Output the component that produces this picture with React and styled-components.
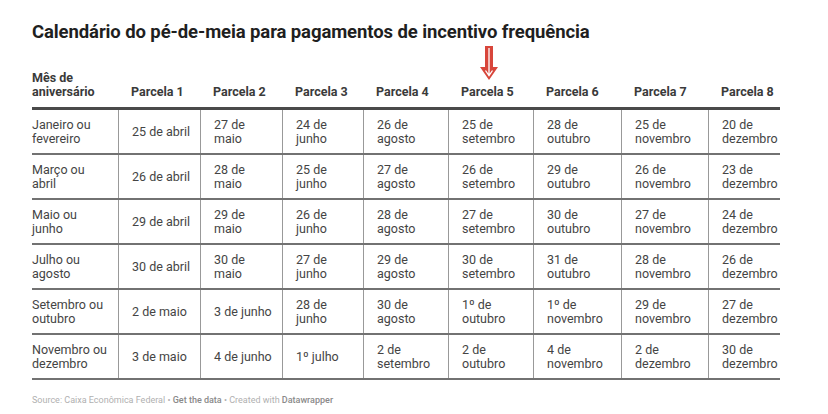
import React from "react";
import styled, { createGlobalStyle } from "styled-components";

const GlobalStyle = createGlobalStyle`
  html, body {
    margin: 0;
    padding: 0;
    background: #fff;
  }
  body {
    font-family: Roboto, "Liberation Sans", Arial, sans-serif;
  }
`;

const columns = "86px 82px 82px 81px 85px 85px 88px 87px 72px";

const headers = [
  "Parcela 1",
  "Parcela 2",
  "Parcela 3",
  "Parcela 4",
  "Parcela 5",
  "Parcela 6",
  "Parcela 7",
  "Parcela 8",
];

// "\n" marks where the cell wraps in the chart
const rows = [
  ["Janeiro ou\nfevereiro", "25 de abril", "27 de\nmaio", "24 de\njunho", "26 de\nagosto", "25 de\nsetembro", "28 de\noutubro", "25 de\nnovembro", "20 de\ndezembro"],
  ["Março ou\nabril", "26 de abril", "28 de\nmaio", "25 de\njunho", "27 de\nagosto", "26 de\nsetembro", "29 de\noutubro", "26 de\nnovembro", "23 de\ndezembro"],
  ["Maio ou\njunho", "29 de abril", "29 de\nmaio", "26 de\njunho", "28 de\nagosto", "27 de\nsetembro", "30 de\noutubro", "27 de\nnovembro", "24 de\ndezembro"],
  ["Julho ou\nagosto", "30 de abril", "30 de\nmaio", "27 de\njunho", "29 de\nagosto", "30 de\nsetembro", "31 de\noutubro", "28 de\nnovembro", "26 de\ndezembro"],
  ["Setembro ou\noutubro", "2 de maio", "3 de junho", "28 de\njunho", "30 de\nagosto", "1º de\noutubro", "1º de\nnovembro", "29 de\nnovembro", "27 de\ndezembro"],
  ["Novembro ou\ndezembro", "3 de maio", "4 de junho", "1º julho", "2 de\nsetembro", "2 de\noutubro", "4 de\nnovembro", "2 de\ndezembro", "30 de\ndezembro"],
];

export default function App() {
  return (
    <Page>
      <GlobalStyle />
      <Title>Calendário do pé-de-meia para pagamentos de incentivo frequência</Title>
      <Table>
        <HeadRow>
          <HeadCell first>
            Mês de
            <br />
            aniversário
          </HeadCell>
          {headers.map((h) => (
            <HeadCell key={h}>
              <HeadLabel>
                {h === "Parcela 5" && <Arrow />}
                {h}
              </HeadLabel>
            </HeadCell>
          ))}
        </HeadRow>
        {rows.map((r) => (
          <Row key={r[0]}>
            {r.map((c, i) => (
              <Cell key={i} first={i === 0}>
                {c}
              </Cell>
            ))}
          </Row>
        ))}
      </Table>
      <Source>
        Source: Caixa Econômica Federal • <strong>Get the data</strong> • Created with{" "}
        <strong>Datawrapper</strong>
      </Source>
    </Page>
  );
}

function Arrow() {
  return (
    <ArrowSvg viewBox="0 0 18 34" width="18" height="34">
      <path d="M5 0h8v21h5L9 34 0 21h5z" fill="#d8463b" />
      <path d="M9 2v27M5.5 24.5 9 29.5l3.5-5" stroke="#fff" strokeWidth="1.3" fill="none" />
    </ArrowSvg>
  );
}

const Page = styled.div`
  padding: 19px 0 0 32px;
  width: 796px;
  box-sizing: border-box;
`;

const Title = styled.h1`
  margin: 0;
  font-size: 18.5px;
  font-weight: 700;
  line-height: 26px;
  color: #1f1f1f;
  letter-spacing: -0.1px;
`;

const Table = styled.div`
  margin-top: 26px;
  width: 748px;
`;

const HeadRow = styled.div`
  display: grid;
  grid-template-columns: ${columns};
  align-items: end;
  border-bottom: 3px solid #4a4a4a;
  padding-bottom: 8px;
`;

const HeadCell = styled.div`
  font-size: 12.5px;
  font-weight: 700;
  line-height: 14px;
  color: #3a3a3a;
  padding-left: ${(p) => (p.first ? "0" : "13px")};
`;

const HeadLabel = styled.span`
  position: relative;
  display: inline-block;
`;

const ArrowSvg = styled.svg`
  position: absolute;
  left: 19px;
  bottom: calc(100% + 5px);
`;

const Row = styled.div`
  display: grid;
  grid-template-columns: ${columns};
  height: 45px;
  border-bottom: 2px solid #727272;
  box-sizing: border-box;
`;

const Cell = styled.div`
  display: flex;
  align-items: center;
  padding: ${(p) => (p.first ? "0 8px 0 0" : "0 6px 0 13px")};
  border-left: ${(p) => (p.first ? "none" : "1.5px solid #999")};
  font-size: 12.5px;
  line-height: 14px;
  color: #444;
  white-space: pre-line;
`;

const Source = styled.div`
  margin-top: 15px;
  font-size: 9px;
  color: #b0b0b0;
  strong {
    font-weight: 500;
    color: #8a8a8a;
  }
`;
